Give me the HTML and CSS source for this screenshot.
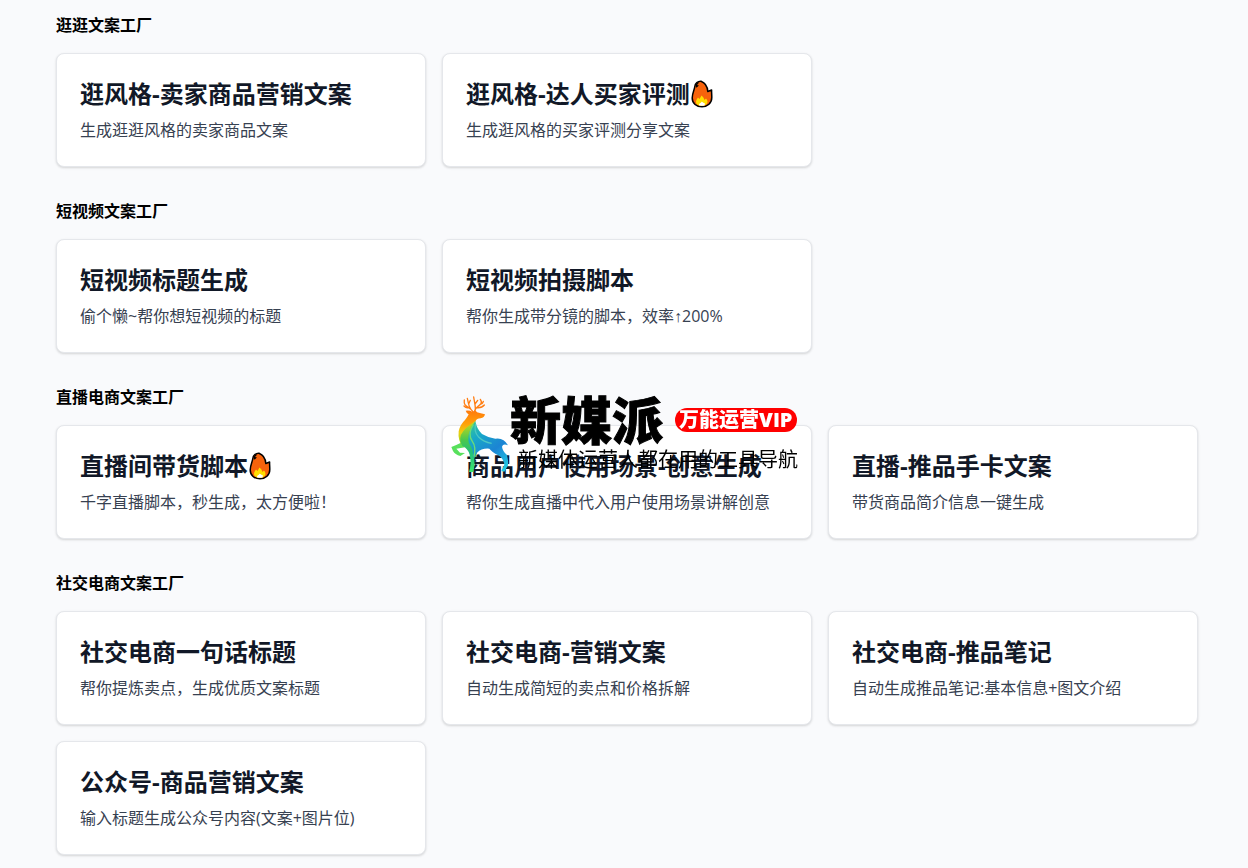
FILE: index.html
```html
<!DOCTYPE html>
<html lang="zh-CN">
<head>
<meta charset="utf-8">
<meta name="viewport" content="width=device-width, initial-scale=1">
<title>文案工厂</title>
<link rel="stylesheet" href="styles.css">
</head>
<body>
<svg class="defs" width="0" height="0" aria-hidden="true">
  <symbol id="fire" viewBox="0 0 22 28">
    <path d="M10 1.200C7 1 4 3.200 3.800 6.500C3.700 9 1.200 13 1.200 18C1.200 23.500 5.500 26.800 11 26.800C16.500 26.800 20.800 23 20.800 17.500C20.800 14.500 20.500 12.500 20.600 10L16.800 11.500C16.500 6.500 13.500 2.500 10 1.200Z" fill="#f7630c" stroke="#000" stroke-width="1.500" stroke-linejoin="round"/>
    <path d="M7.500 2.500C5.500 4 4.800 5.500 5.600 6.800L7.300 5.200" fill="none" stroke="#000" stroke-width="1.200"/>
    <path d="M5 22C5 19.500 6.500 18.500 7 17.500L8.500 19L10.500 15.500C12.500 17 13 18.500 13.500 20L15 18.500C16.500 20 17 22 16 23.500C14.500 25.500 12.500 25.900 11 25.900C8 25.900 5 24.500 5 22Z" fill="#ffde00"/>
    <path d="M8 25.200C8 23 10 23.500 10.500 21.800C12 22 12 23 14 23.500L13.500 25.400Q11 26.200 8 25.200Z" fill="#fff"/>
  </symbol>
</svg>

<main class="page">
  <section class="group">
    <h2 class="group-title">逛逛文案工厂</h2>
    <div class="cards">
      <a class="card" href="#"><h3 class="card-title">逛风格-卖家商品营销文案</h3><p class="card-text">生成逛逛风格的卖家商品文案</p></a>
      <a class="card" href="#"><h3 class="card-title">逛风格-达人买家评测<svg class="fire" role="img" aria-label="热门"><use href="#fire"/></svg></h3><p class="card-text">生成逛风格的买家评测分享文案</p></a>
    </div>
  </section>

  <section class="group">
    <h2 class="group-title">短视频文案工厂</h2>
    <div class="cards">
      <a class="card" href="#"><h3 class="card-title">短视频标题生成</h3><p class="card-text">偷个懒~帮你想短视频的标题</p></a>
      <a class="card" href="#"><h3 class="card-title">短视频拍摄脚本</h3><p class="card-text">帮你生成带分镜的脚本，效率<span class="arrow">↑</span>200%</p></a>
    </div>
  </section>

  <section class="group">
    <h2 class="group-title">直播电商文案工厂</h2>
    <div class="cards">
      <a class="card" href="#"><h3 class="card-title">直播间带货脚本<svg class="fire" role="img" aria-label="热门"><use href="#fire"/></svg></h3><p class="card-text">千字直播脚本，秒生成，太方便啦！</p></a>
      <a class="card" href="#"><h3 class="card-title">商品用户使用场景-创意生成</h3><p class="card-text">帮你生成直播中代入用户使用场景讲解创意</p></a>
      <a class="card" href="#"><h3 class="card-title">直播-推品手卡文案</h3><p class="card-text">带货商品简介信息一键生成</p></a>
    </div>
  </section>

  <section class="group">
    <h2 class="group-title">社交电商文案工厂</h2>
    <div class="cards">
      <a class="card" href="#"><h3 class="card-title">社交电商一句话标题</h3><p class="card-text">帮你提炼卖点，生成优质文案标题</p></a>
      <a class="card" href="#"><h3 class="card-title">社交电商-营销文案</h3><p class="card-text">自动生成简短的卖点和价格拆解</p></a>
      <a class="card" href="#"><h3 class="card-title">社交电商-推品笔记</h3><p class="card-text">自动生成推品笔记:基本信息+图文介绍</p></a>
      <a class="card" href="#"><h3 class="card-title">公众号-商品营销文案</h3><p class="card-text">输入标题生成公众号内容(文案+图片位)</p></a>
    </div>
  </section>
</main>

<div class="watermark">
  <svg class="deer" viewBox="27 30 180 240" aria-hidden="true">
    <defs>
      <linearGradient id="head" gradientUnits="userSpaceOnUse" x1="0" y1="80" x2="0" y2="190"><stop offset="0" stop-color="#ff7a0c"/><stop offset=".35" stop-color="#ffa008"/><stop offset=".6" stop-color="#e8d010"/><stop offset="1" stop-color="#7fdc30"/></linearGradient>
      <linearGradient id="chest" gradientUnits="userSpaceOnUse" x1="0" y1="115" x2="0" y2="265"><stop offset="0" stop-color="#c8d81c"/><stop offset=".35" stop-color="#4cc84c"/><stop offset=".6" stop-color="#22c07c"/><stop offset="1" stop-color="#3be86c"/></linearGradient>
      <linearGradient id="body" gradientUnits="userSpaceOnUse" x1="85" y1="120" x2="195" y2="260"><stop offset="0" stop-color="#38c890"/><stop offset=".25" stop-color="#18a8c8"/><stop offset=".6" stop-color="#1c84d4"/><stop offset="1" stop-color="#22d0e4"/></linearGradient>
    </defs>
    <g fill="none" stroke="#ff7d12" stroke-width="4" stroke-linecap="round" stroke-linejoin="round">
      <path d="M95 82C88 72 78 70 72 62C68 56 70 50 70 48M84 70C76 74 72 69 69 66M89 75C82 66 82 54 79 43M83 60L88 49"/>
      <path d="M101 82C101 72 112 68 119 60C124 54 120 49 118 46M108 71C119 72 126 68 130 63M103 75C103 63 101 58 98 39M102 60L110 49M117 61C124 60 126 56 127 52"/>
    </g>
    <path d="M60 176Q44 184 31 189L36 201Q42 212 58 216L72 207L57 206L46 194L72 190Z" fill="#58e05c"/>
    <path d="M74 80Q85 78 94 83L103 79L108 85Q119 88 132 91Q130 101 119 103Q107 103 103 113Q88 132 78 140L66 190Q50 170 53 142Q57 122 72 108Q80 98 83 91Q76 87 74 80Z" fill="url(#head)"/>
    <path d="M103 111Q70 132 60 152Q54 170 64 186Q80 192 86 212Q92 237 84 264H97Q103 242 100 222Q112 208 108 190Q86 166 88 147Q90 130 103 111Z" fill="url(#chest)"/>
    <path d="M103 111Q107 135 123 150Q139 160 163 164Q188 160 201 184Q186 178 183 188Q185 202 198 213Q203 234 201 244L190 263L181 261L190 242Q188 224 172 214Q152 203 145 194Q122 192 108 206Q100 214 97 222Q98 196 84 178Q80 168 84 148Q90 126 103 111Z" fill="url(#body)"/>
    <path d="M97 122Q78 150 94 172Q106 188 99 218" fill="none" stroke="#6cdc78" stroke-width="4"/>
    <path d="M104 120Q98 142 112 158Q128 174 152 178" fill="none" stroke="#4cc8c4" stroke-width="4"/>
  </svg>
  <div class="brand">
    <div class="brand-row">
      <span class="brand-name">新媒派</span>
      <span class="brand-badge">万能运营VIP</span>
    </div>
    <div class="brand-tagline">新媒体运营人都在用的工具导航</div>
  </div>
</div>
</body>
</html>
```

FILE: styles.css
```css
* {
  box-sizing: border-box;
}

body {
  margin: 0;
  min-height: 100vh;
  background: #f9fafc;
  color: #000;
  font-family: "Open Sans", "Noto Sans CJK SC", sans-serif;
  font-size: 16px;
  line-height: 24px;
}

h2,
h3,
p {
  margin: 0;
}

.defs {
  position: absolute;
}

.page {
  display: flex;
  flex-direction: column;
  gap: 32px;
  padding: 13px 50px 13px 56px;
}

.group {
  display: flex;
  flex-direction: column;
  gap: 16px;
}

.group-title {
  font-size: 16px;
  line-height: 24px;
  font-weight: 700;
}

.cards {
  display: grid;
  grid-template-columns: repeat(3, minmax(0, 1fr));
  gap: 16px;
}

.card {
  display: flex;
  flex-direction: column;
  gap: 8px;
  padding: 24px 23px;
  background: #fff;
  border: 1px solid #e5e7eb;
  border-radius: 8px;
  box-shadow: 0 1px 3px rgba(0, 0, 0, 0.1), 0 1px 2px rgba(0, 0, 0, 0.06);
  text-decoration: none;
}

.card-title {
  color: #111827;
  font-size: 24px;
  line-height: 32px;
  font-weight: 700;
}

.card-text {
  color: #374151;
}

.arrow {
  font-family: "Liberation Sans", sans-serif;
  line-height: 16px;
}

.fire {
  width: 24px;
  height: 28px;
  vertical-align: -5px;
}

.watermark {
  position: fixed;
  inset: 0;
  display: flex;
  align-items: center;
  justify-content: center;
  pointer-events: none;
}

.deer {
  width: 60px;
  height: 80px;
}

.brand-row {
  display: flex;
  align-items: center;
  gap: 12px;
}

.brand-name {
  font-size: 51px;
  line-height: 52px;
  font-weight: 900;
  -webkit-text-stroke: 1px #000;
}

.brand-badge {
  padding: 0 4px;
  border-radius: 12px;
  background: #f00;
  color: #fff;
  font-size: 20px;
  line-height: 24px;
  font-weight: 800;
}

.brand-tagline {
  padding-left: 8px;
  font-size: 20px;
  line-height: 28px;
}
```
